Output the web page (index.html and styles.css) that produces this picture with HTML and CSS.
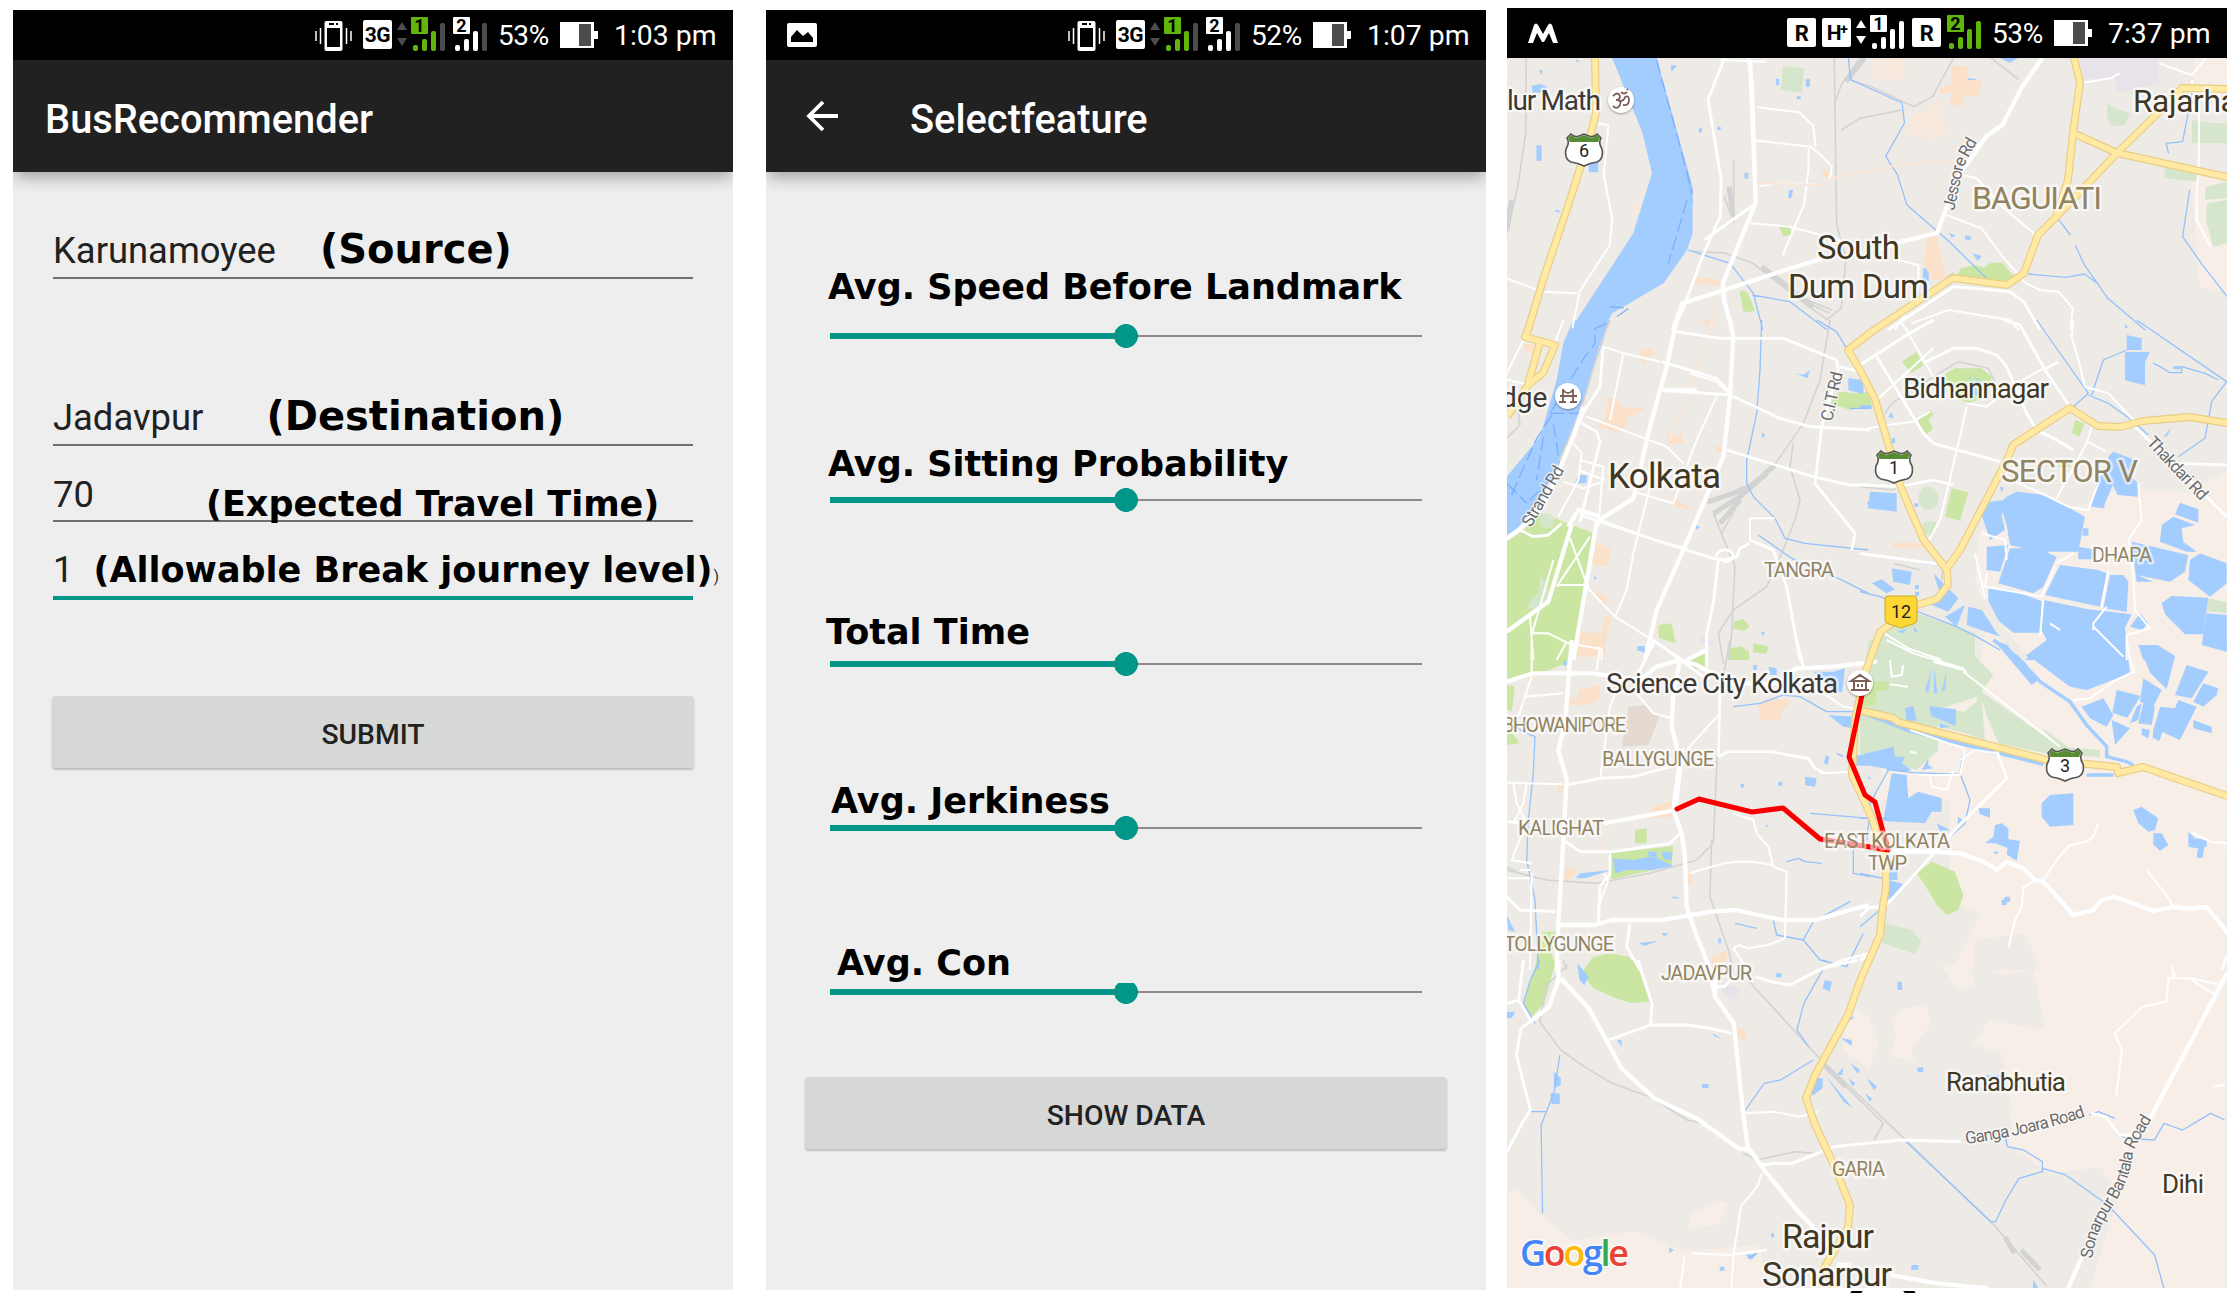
FILE: index.html
```html
<!DOCTYPE html>
<html lang="en">
<head>
<meta charset="utf-8">
<title>BusRecommender</title>
<link rel="stylesheet" href="styles.css">
</head>
<body>
<svg class="defs" width="0" height="0" aria-hidden="true">
  <defs>
    <symbol id="vibrate" viewBox="0 0 37 32"><path d="M1 11v10M5.500 8v16M31.500 8v16M36 11v10" stroke="#fff" stroke-width="1.500"/><rect x="9.500" y="1" width="18" height="30" rx="2" fill="#fff"/><path d="M12 8h13v19H12zM14 3h5v2h-5zM21 3h2v2h-2z" fill="#000"/></symbol>
    <symbol id="updown" viewBox="0 0 10 24"><path d="M5 0l5 8H0zM5 24l5-8H0z" fill="currentColor"/></symbol>
    <symbol id="battery" viewBox="0 0 38 26"><path d="M0 0h34v9h4v8h-4v9H0z" fill="#fff"/><path d="M19 2h12v22H19z" fill="#4d4d4d"/></symbol>
    <symbol id="shield" viewBox="-20 -18 40 36"><path id="shape" d="M-17-12l4-4q4 4 8 2l5-2 5 2q4 2 8-2l4 4q-3 5 1 11 2 10-5 13-7 1-13 4-6-3-13-4-7-3-5-13 4-6 1-11z" fill="#fff" stroke="#555" stroke-width="1.600"/><path d="M-16-12l3-3q4 4 8 2l5-2 5 2q4 2 8-2l3 3q-2 2-1.500 4h-29q0-2-1.500-4z" fill="#568c32"/></symbol>
  </defs>
</svg>
<main class="board">

  <section class="phone">
    <header class="status">
      <svg class="vib"><use href="#vibrate"/></svg>
      <b class="net">3G</b>
      <svg class="updown dim"><use href="#updown"/></svg>
      <span class="sim green"><b>1</b><i class="b1"></i><i class="b2"></i><i class="b3"></i><i class="b4 off"></i></span>
      <span class="sim"><b>2</b><i class="b1"></i><i class="b2"></i><i class="b3"></i><i class="b4 off"></i></span>
      <span class="pct">53%</span>
      <svg class="bat"><use href="#battery"/></svg>
      <time>1:03 pm</time>
    </header>
    <div class="appbar"><h1>BusRecommender</h1></div>
    <form class="form">
      <div class="field source"><span class="val">Karunamoyee</span><span class="note big">(Source)</span></div>
      <div class="field dest"><span class="val">Jadavpur</span><span class="note big">(Destination)</span></div>
      <div class="field travel"><span class="val">70</span><span class="note">(Expected Travel Time)</span></div>
      <div class="field level"><span class="val">1</span><span class="note">(Allowable Break journey level)</span><small>)</small></div>
      <button type="button">SUBMIT</button>
    </form>
  </section>

  <section class="phone second">
    <header class="status">
      <svg class="photo" viewBox="0 0 30 24"><rect width="30" height="24" rx="2" fill="#fff"/><path d="M4 19V14l6-7 6 6 5-4 5 6v4z" fill="#000"/></svg>
      <svg class="vib"><use href="#vibrate"/></svg>
      <b class="net">3G</b>
      <svg class="updown dim"><use href="#updown"/></svg>
      <span class="sim green"><b>1</b><i class="b1"></i><i class="b2"></i><i class="b3"></i><i class="b4 off"></i></span>
      <span class="sim"><b>2</b><i class="b1"></i><i class="b2"></i><i class="b3"></i><i class="b4 off"></i></span>
      <span class="pct">52%</span>
      <svg class="bat"><use href="#battery"/></svg>
      <time>1:07 pm</time>
    </header>
    <div class="appbar">
      <svg class="back" viewBox="0 0 33 32"><path d="M32 16H3M17 2L3 16l14 14" fill="none" stroke="#fff" stroke-width="3.800"/></svg>
      <h1>Selectfeature</h1>
    </div>
    <div class="features">
      <div class="feature f1"><label>Avg. Speed Before Landmark</label><div class="slider"><i></i></div></div>
      <div class="feature f2"><label>Avg. Sitting Probability</label><div class="slider"><i></i></div></div>
      <div class="feature f3"><label>Total Time</label><div class="slider"><i></i></div></div>
      <div class="feature f4"><label>Avg. Jerkiness</label><div class="slider"><i></i></div></div>
      <div class="feature f5"><label>Avg. Con</label><div class="slider"><i></i></div></div>
      <button type="button">SHOW DATA</button>
    </div>
  </section>

  <section class="phone third">
    <header class="status">
      <svg class="moto" viewBox="0 0 30 20"><path d="M0 20L6 2q2-3 4 0l5 9 5-9q2-3 4 0l6 18h-5l-4-10-5 9h-2l-5-9-4 10z" fill="#fff"/></svg>
      <b class="net r">R</b>
      <b class="net h">H⁺</b>
      <svg class="updown"><use href="#updown"/></svg>
      <span class="sim"><b>1</b><i class="b1"></i><i class="b2"></i><i class="b3"></i><i class="b4"></i></span>
      <b class="net r r2">R</b>
      <span class="sim green second-sim"><b>2</b><i class="b1"></i><i class="b2"></i><i class="b3"></i><i class="b4"></i></span>
      <span class="pct">53%</span>
      <svg class="bat"><use href="#battery"/></svg>
      <time>7:37 pm</time>
    </header>
    <svg class="map" viewBox="1507 58 720 1230" width="720" height="1230">
      <rect class="land" x="1507" y="58" width="720" height="1230"/>
      <path class="rural" d="M2227 470l-37 22-40 0-20-10-30 15-40 18-80 15-5 50 12 40-8 50-70 20-50 20 30 35-15 55 76 0 0 100 30 15-30 60 30-10 20 10 34-5 11 60-56-10-16 24 30 10 9 53-4 37 42 30 51-7 17 30-30 98h137z"/>
      <path class="rural" d="M1507 1193l10-4 25 28 32 24 60-10 52 20 74-6 6 43h-259zM1848 1005l22 12 8 30-10 22-25-20zM1900 1010l25-6 6 20-20 25 4 12-24-4 5-25-4-14zM2195 58h32v30l-15 20-20-20zM2190 170l37 12v110l-27-5-5-60zM1940 965l30 0 4 20-15 5zM1690 1215l30-14 8 3-10 20-30 6z"/>

      <g class="areas">
        <g transform="translate(1500) scale(.46755 .33333)">
          <path class="water" d="M240 174H335L412 560V700L400 750 350 850 240 940 220 990H150L285 700 325 520 305 400zM365 195l14 2-12 18zM78 436h11v46H78zM67 258l20-6 15 8-10 18H70zM190 482h20v35h-20zM523 518h8v18h-8zM618 570h9l-4 24h-7zM1010 760l20 8-8 15zM905 805l12 2v38h-14zM1070 174h38l-18 15zM654 238h9v22h-9zM1000 235l18 2v18h-15zM960 698l14 8-8 8zM995 706l12 3v10h-12zM425 385h7v12h-7zM465 380h7v10h-7zM160 180h8v10zM82 210h8v15zM635 288l8 1v8h-8zM15 628h9l-9 55zM115 630h12v10zM590 236h7v20h-7z"/>
          <path class="park" d="M596 678l20-4 10 30-20 4zM512 872l16 3 18 58-25 4zM985 805l30-10 20 8 15-15 25 0 35 60-135-12zM955 830l15-15 5 20z"/>
          <path class="pale" d="M605 198l45 7-5 75-45-10zM1300 310l15 15 32 15-10 35-30 4-10-30zM1480 360l45 10 30 0v60l-55 0-20 0zM1422 505l70 10v30l-70-10zM1510 560l45-15v50l-48 5zM1512 610l43-10v130l-30 10-15-80z"/>
          <path class="beige" d="M965 195l35 5 0 40 30 0-5 50-30-5-10 35-25-10 10-30-30 0 0-20 25-5zM915 710l20 0 20 130-30 0-20-50zM415 830l55 10v18l-55-10zM690 510l20 0v20h-20zM435 960h15v15h-15z"/>
          <path class="soft" d="M880 345l30-15 20-35 20 20 0 40 10 50-40 15-25-20-25 10zM800 174h68v65h-70zM280 620l20-8v25h-20z"/>
          <path class="lilac" d="M1240 174h170v75l-90 30-5-45-65 5z"/>
        </g>
        <g transform="translate(1500 320) scale(.33333)">
          <path class="water" d="M220 0H330L300 90 240 270 190 400 120 540 60 620 20 655V470L120 350 170 180 190 70zM20 865l50-10v20l-50 12zM235 465h25v25h-35zM230 810h12v25h-15zM105 955h12v25h-14zM155 960l15 0v20h-20zM585 615l15 5-10 10zM885 160l25 5 20-15-8 25zM1045 175l45 5-10 40-35-10zM255 695h8v22h-12zM785 340h8v12h-8zM783 935l12 2-6 12zM412 978h22v14h-22zM1100 545h10v25zM282 765l8 10-8 6z"/>
          <path class="park" d="M20 665l45-30 60-55 155 60-45 350-10 30H20zM1020 215l50 5 40-5v45l-60 10-60-20zM475 915l40-5 12 60-50-15zM700 905l30-8 18 20-12 15-35-5zM692 985l30-6 25 15 0 26h-60zM760 972l40 5v20l-40 0zM200 365l-40 90 25-10zM555 1020l60-30v30z"/>
          <path class="pale" d="M140 580a22 22 0 1 0 1 0zM120 765l25 30-5 60-55 15 0-20 30-30z"/>
          <path class="beige" d="M325 230l30 10 10 20 70 5-30 20-20 0-5 30-30 20-60-15 25-25zM420 95l25-10 25 15-25 15-15 20zM285 665l45 20-5 50-40 5-10-20 10-25zM240 935l65 5 10-50 20-5-20 90-80-5zM510 530l80 45-60-15zM500 345l45-2 5 25-25 5-20 0zM275 800l45 30 0 40zM645 378h20v20h-15zM70 70l40 5-8 30-25-15z"/>
          <path class="lilac" d="M600 945l45 25-10 10-40-15z"/>
        </g>
        <g transform="translate(1860 320) scale(.33333)">
          <path class="water" d="M800 45l45 10 0 35-45 0zM795 96l75 0-15 30 0 70-60-15zM30 515l80 5 0 55-85-10zM760 395l65 25-20 40 28 30 0 40-60-5-15-30-25 60 0 10-40-5 22-90 25-10 5-50zM960 548l55 20v40l-70-25zM940 590l65 25-40 10 5 40 40 30-30 0-80-30 5-50zM440 530l30-15 85 10 120 65-20 105-120 0-85-20-10-60-20-65zM365 585l25-40 45-5-10 50 10 40-45 30zM380 680l65-5-25 80-40-5zM450 685l85 0 55 25-40 90-30 20-105-30zM600 735l115 15 25 10-20 100-165-35zM750 765l40 0 15 20-5 90-70-10zM385 805l60 3 100 35-5 95-80 0-75-60zM550 840l135 28 130 15-20 40 10 97H480l80-60-20-40zM655 680l45 8v30l-45 0zM670 625h15v22h-18zM815 665l170 40-10 50-45 30-100-20 50 20-50 0zM1020 700l80 30v60l-50 40-65-50 5-60zM905 850l30-22 110 5-15 110-55 0-60-60zM1040 880l60 5v110l-75-20zM835 975l60 0 50 45H850zM840 880l25 30-20 20-35-10zM95 745l60 10-5 40-50-10zM35 790l30-12 40 30-25 12zM220 760l75 75-30 40-50-20 30-20zM255 890l60-35-25 65zM325 860l40 10 55 80-100-35zM165 795h12v12h-12zM165 815h12v12h-12zM0 190h10v30H0zM0 255h35v12H0zM95 355h10v15H95zM795 12l10 12h-10zM420 500l12 3-8 14zM163 550h12v10h-12zM935 322l-25 30 12-5zM940 138h22v10h-22z"/>
          <path class="park" d="M125 125l45-30 20 40-35 25zM250 165l35-20 40 0 40 0 30 25-10 60-60 20-50-20zM170 300l40-30 10 15-15 15 15 25-20 18zM275 505l50 12-25 85-45-12zM645 300l28 10-15 40-22-10zM0 225l30 0 5 30H0zM590 430h40v10h-35z"/>
          <path class="pale" d="M205 500a30 35 0 1 0 1 0zM190 605l40 0-10 45-30-10zM1045 835l55 12v32l-60-5zM75 925l95-45 175 60v80H25z"/>
          <path class="beige" d="M100 668l90 2v15h-90z"/>
          <path class="water" d="M330 170l15 35 20 20-30 0zM345 170l30 25-10 30zM85 290l10-15 5 20zM110 935l30-10-10 15zM195 970l80-8-40 30zM75 975l60 15 10 8zM160 920l15 15h-12z"/>
        </g>
        <g transform="translate(1500 640) scale(.33333)">
          <path class="park" d="M20 0H215L200 70 95 110 20 130zM555 60l60-20 0 50-40-5zM405 570l35-5v45h-35zM325 640l195-22-5 60-180 40zM20 135l25 5-10 75-15-5zM20 260l40 50-40 5zM125 875l50 0-20 60 10 55H105l10-60zM250 990l30-40 50-10 55 10 30 40zM760 10l45 12-5 20-42-5zM690 25l55 20-5 15-50-10z"/>
          <path class="water" d="M340 655l60 5 60-12 60 30-60 12-80 0-35 10zM240 700l95-10-80 25-28 0zM485 635l30 0 0 25-25-3zM445 635l25 0 0 15-25-3zM415 18l20 8-2 12-20-8zM805 80l25 5v20h-20zM940 95l60 0 35-10-8 70-20 5zM985 225l75 5v35l-30-5zM1058 345l52 0v32l-50 0zM978 345l10 5-5 25-12-5zM720 432h12v8l-8 5zM835 425h12v12h-12zM915 410l35 5-5 25-30-5zM20 825l25 50-20-5zM190 62h10v15h-10zM440 285l12 0v8l-10-2zM485 880l22 0-15 10zM415 910l60-8-40 15zM655 895h8v15h-8zM515 770h20v5h-20zM800 550l5 10-7 0zM760 75h10v15h-10z"/>
          <path class="beige" d="M235 150l65-15 0 40-30 20-65 0 5-20 25 0zM455 500l60-15 10 45-75 5zM775 195l30-20 70 5-25 30-10 30-60 0zM175 430l25 0v25h-30zM230 0h85v50h-85zM200 680l30 10-20 30-20-5zM630 950l50-20 0 35-40 10zM555 700h20v35h-20z"/>
          <path class="hospital" d="M385 200l50-5 15 15 30 15-35 90-80 5z"/>
        </g>
        <g transform="translate(1860 640) scale(.33333)">
          <path class="pale" d="M25 0H345V50L400 105 365 155 600 320 720 330V350L580 345 415 310 385 240 365 180 375 300 300 275 300 225 350 185V170L230 210 235 330 170 390 100 370 0 340V215zM545 262l80 60-30 0zM70 850l80 18 35 35-20 38-80-25-25-10z"/>
          <path class="park" d="M35 125l50 0 0 25-35 5-5 40-40 5zM170 700l45-35 70 30 25 70-15 45-35 15-30-30-35-60z"/>
          <path class="pale" d="M220 200l90 15-10 60-80-20z"/>
          <path class="water" d="M510 50l100-50 190 20 10 80-130 50-50-10zM400 0l60 20 75 100-20 15zM620 0h170l-20 20zM840 20l65 3 40 25-25 100-50-50zM980 75l65 20-50 80-50-10zM1030 130l45 15-5 20-40 35-30-15zM770 150l72 18-40 65-45-15zM665 200l65-25 30 50-20 35-50-25zM850 115l55 35-25 50-40-15zM850 190l35 10-10 55-40-5zM900 200l45 5-25 75-40-10zM955 180l55 20-50 100-45-20zM1000 240l55 20v20l-55-15zM755 240l55 25-45 50zM845 265l25 5-5 25-20-10zM880 265l28 8-10 30-20-10zM810 250l20-50 15-10-10 50zM135 205l25-8 10 45-30 0zM208 198l80 10 0 50-75-30zM240 250l30 10-30 5zM195 150l20-60-10 70zM222 160l0-80 10 80zM245 158l15-70-5 60zM0 345l100-25 5 30 30 0-10 20 30 20-25 5-125-22zM95 400l45 5 5 70 30-20 70 20v40l-30 0-20 35-125-7zM185 390l20-35 0 20 15 10zM355 505l35 0v28l-30-10zM405 555l20-5 20 15 0 60-40-15-30 0 25-20zM445 598l35 5-10 60-30-20zM545 490l25-25 70-5v95l-70 5-25-30zM820 510l25-10 50 35-10 35-20 5-30-25zM880 580l25 0 20 35-25 18-20-20zM985 575l20 20 35 5 0 20-30 5-25-5zM1015 620l18 0-5 33-18 0zM90 660l22 0v60l-22 0zM85 720l45 12-45 50zM435 770h15v15l-22 0zM425 780h15v15h-15zM230 550l40 20-30 5zM295 530l12 10-15 15zM1030 0h70v35l-45-15zM400 635h15l-8 10zM25 405l8 12h-8z"/>
          <path class="land" d="M345 900l150-20 50 110H345z"/>
        </g>
        <g transform="translate(1500 960) scale(.46755 .33333)">
          <path class="park" d="M80 0h40L95 130 68 170 50 130zM175 40l20-40h95l30 125-40 5-40-20-40-25z"/>
          <path class="water" d="M165 10l25 40-10 25-10-15zM695 60l15 5-5 30-15-10zM735 175l25-5-20 20zM730 235l22 5 0 18zM750 310l20 20-5 12zM720 345l15-25-3 25zM745 355l15 15-5 10zM785 355l22 25-8 10zM780 400l15 15-3 12zM695 345l60 100-20-20zM675 355l15 0 0 30-20 20-20-10zM115 335l15 20 0 20-15 10zM108 400h20v32h-18zM432 372h14v12h-14zM893 322h12v14h-12zM850 65h10v25h-10zM525 885l25-5-12 20zM362 862l10 8-10 10zM880 915h15v15h-15zM250 240h10v20zM455 220l20 18-18-10zM15 155h18l-8 20H15zM1140 960l12 25h-12zM590 40h12v12h-12zM470 920h10v12h-10zM580 820h6v12h-6zM1040 345h35v8h-35z"/>
          <path class="beige" d="M495 200l30 10 0 30-20-10zM605 700h12v10h-12z"/>
          <path class="lilac" d="M480 70l35 15-15 38-25-30z"/>
        </g>
      </g>

      <g class="lines">
        <g transform="translate(1500) scale(.46755 .33333)">
          <path class="rail" d="M56 174L55 400 38 560 15 700M715 174l5 500 20 100-10 150-30 35-60-60-100-110-60-30-70-5M770 174l-40 80-15 60M735 235l60 25 90 60 40-30 45-116M730 390l40-35 90-25M500 480v190M480 590l15 60M1050 174l60 65M660 910l45 30M640 890l70 40"/>
          <path class="rail thick" d="M25 600L15 690M560 800l110 120M780 174l-40 70M490 560l8 90"/>
          <path class="stream" d="M745 174l5 65 110 70 5 60-40 100 25 55 20 90 90 110 80 110M402 750l90 40 50 90 20 110M540 885l80 20 80 85M1190 650l30 55M1230 735l20 60 50 100 80 95M1130 822l80 10 40-10 30 30M1480 280l-20 145-35 5 5 30M1475 570l-15 140 40 80 55 100M400 520l12 90"/>
          <path class="dash" d="M335 180l77 400M400 600l-40 190M235 920l40 5-30 30"/>
          <path class="road thin" d="M205 370l27 5-10 150 18 130-5 80-65 140-15 110M15 835l75 40 75 5M540 420l125 20 25 30 20 30-5 40-15 15-90-5-45 8M660 445l0 60-10 110-45 150M550 322l90 15 30 40 5 65M535 670l85 10 80 30 40 15M955 645l75 40 45 85 50 80 30 20 40 5 30 50-5 65M990 525l30 10 50 80 80 95M850 780l45 15 0 60-30 90-20 45M880 970l80-40 130 30 20 30M1240 250l65-15 20-15M1410 190l70 35 30-51M1480 240l0 20 15 40 0 180-5 100 0 80 30 80M470 180l100 5"/>
          <path class="road" d="M480 174l-35 125 28 240-2 110-35 110-45 170-20 60M530 174l10 70 8 365-110 110"/>
          <path class="road wide" d="M535 178l12 430-70 240 2 50 18 95M1160 174l-45 90-40 110-35 35-30 60-25 50-40 140-10 40-75 25-60 30M690 775l-80 35-130 60-90 40-20 80"/>
          <path class="road" d="M830 990l140-130 120 15 30 30 35 85"/>
          <path class="peach" d="M550 550l140 5 20-20 120-35 140-20M470 880l-15 110"/>
        </g>
        <g transform="translate(1500 320) scale(.33333)">
          <path class="rail" d="M330 0l-30 75-50 170-85 215M990 0l-30 180-50 130-90 130-80 60M880 370l-10 70 30 100-15 60-40 100-45 100-100 70-45 70 15 90M620 550l180-80M640 590l180-150M640 580l65 160-10 200-10 80M665 640l60-110M20 355l40-40-5-40-40-10"/>
          <path class="rail thick" d="M625 545l120-40 80-70M640 580l80-50 80-70M660 610l60-70"/>
          <path class="stream" d="M785 0l-5 150-10 130-30 140 0 70 20 40 65 65 30 60 60 15 190 20M775 645l100 70 140 60 90 45M950 0l60 35 35 60M1110 265l-60 0"/>
          <path class="dash" d="M320 10l-35 15v45l-30 40-45 70-60 100M150 280h90M155 285l-50 80-70 160M160 310l10 60 10 80-90 90M20 490l60 60M130 350l-20 130"/>
          <path class="peach" d="M640 0l-70 200-60 160M400 510l120 40M680 385l80 30M590 500l25 45M480 900l-25 60"/>
          <path class="road thin" d="M190 0l-25 70M70 60L20 160M20 178l80 20M310 80l60 20-40 200M480 125l-110-25M570 160l80 25 45 45M650 230l-60 130-70 190-120-35M450 500l-50 200-20 110-35 80M260 290l240 90 50 50M220 370l25 30-10 80-60 110M240 420l70 20-15 180M190 485l60 20 60-20M235 450l80 30M750 660l0-65 75 0M300 600l180 65 80 20M100 940l45 0 60 30 100 18v32M90 890l10 130M170 795h95M210 655l55 150M270 650l-100 150M160 720l-65 225M250 790l95 100 105 65 100 65M200 965l-30 55"/>
          <path class="road" d="M530 35l130 20 190 0 160 65 5 30-50 170-20 170 120 150-10 50M310 80l-10 120-45 70-70 160M245 310l45 25 10 30-60 240M480 210l210 15 150 70 90 25 180 10M485 125l165 50 45 50M680 390l260 80 110 25 60 0M240 585l240 80 80 25 80 25 30 5 40-10 10-25 30-15M650 710a25 18 0 1 1 20 15M655 720l-15 130-20 90 0 80M750 660l70 30 40 110 40 220M1020 140l60 15M20 655l40-25 40 20 45-5 40-35"/>
          <path class="road wide" d="M530 0l-30 140-50 180-50 215-110 70-30 180-40 235M690 0l10 50-10 180-20 180-120 280-80 180-35 150M490 210h100M560 1020l60-30M215 615l-70 230-125 90M300 590l-65-20-30 50M250 260l-30 90-90 210-75 70-35 25"/>
        </g>
        <g transform="translate(1860 320) scale(.33333)">
          <path class="stream" d="M530 0l155 220-50 45M685 225l60 25 70 50 50 45M695 225l35-105 70-30M830 0l270 185-45 60-20 110-80 55M880 130l20 10 30 18 35 0v-18l70 20 40 20M0 815l60 15 100 40 130 50 60 30 70 40M0 700l230 35"/>
          <path class="rail" d="M75 280l20-30 110-70 90-55 90 20 20 40M0 500l100 10 15-15M245 780l5-60M100 730l80 20"/>
          <path class="road thin" d="M120 0l25 40 75 130M220 85L50 240M0 330l80-15 80-10 50-30M695 320l-15 50-60 110-30 55M680 365l60 30M560 140l-100 55-80 65-60-10M320 260l-20 90-60 250-35 65M715 490l-30 80-60-10-70-35-80-35-40-25M65 935l80 50 100 35M640 0l-5 50 20 70 20 80 70 20 75 80M835 490l10 110-40 60 15 110 5 100 45 55-70 20v75M700 930l0-20 40-50M700 920l90 90M600 930l-30-20M550 840l-10 110"/>
          <path class="road" d="M0 135L140 45 220 0M50 110l140 230 30 30 200 55M190 130l90-45 70 0 60 20 30 35 60 140 30 50 60 30 50 30M430 0l50 15 75 135 75 110M550 150l45-25M0 495l120 5 100-20 60 15M815 310l285 280M950 430l150 5"/>
          <path class="road" d="M0 700l230 32"/>
          <path class="road thin" d="M365 640l70 20 5 60M380 760l-5 40 170 30 40-90M590 730l50-30M745 750l-20 110M345 700l40 180"/>
          <path class="wash" d="M370 840l45 85 80 95"/>
        </g>
        <g transform="translate(1500 640) scale(.33333)">
          <path class="rail" d="M690 0l-30 160-20 450-50 50-140 40-160 30-150-10-120-30M635 600l-5 170 55 160 15 60M20 680l30 15M190 960l10 30"/>
          <path class="stream" d="M20 245l50 30 35 15-5 110-15 140-5 120 25 120 10 210M700 200l80-10 70-25 50 5 80 45 80 0M1110 520l-10 80-40 30 0 70 50 10M860 665l35-10 20 10 50 5M820 840l10 45 80 15 30-55 110-60M910 900l50 60 80 20 50-100M930 520l180 15M705 850l65 15M1010 340l20 10"/>
          <path class="peach" d="M310 540l0 100"/>
          <path class="road thin" d="M20 428l170 5M40 430l10 60 30 60-45 110 60 10M80 430l-10 60-30 60M75 170l115-10M95 110l-20 60-20 60M300 420l30-220 30-80M410 160l50 60 55 15M560 330l100-110M700 520l60 20 10 40 35 40 15 60 40 15-5 200-50 20-60 10-30-10-15 10 40 60M95 700l-5 290M235 0l-25 60M300 20l-10 70M95 100l0-100M60 690l30 0M20 715h70M310 700l15 20-30 80 0 50M570 700l100-30 40-5 50 0 60 10M960 400l100-5M970 160l60 40 60 10"/>
          <path class="road" d="M200 435l100-20 100-5 110-30M20 770l40 40 105 5M190 600l50 35 100 0 170-25 30-30M330 640l0 60-30 40-5 115M655 350l30-15 130 0 50 10 60 10 20 30 30 15M390 850l-10 70 40 70M465 0l-50 100M460 0l150 110M550 325l-20 170M660 150l-5 200M620 0l0 80M890 0l20 80M20 545l60 5M1110 940l-80 20-70 30"/>
          <path class="road wide" d="M215 0l-20 250-20 80 25 90-10 180-15 250-5 140M20 125l80-25 180 0 140 20 50-40 70-20 50 15 100 55 140 0 60-45 110-5 130-15M540 60l-20 100-5 100 25 100-20 150 25 70 10 70 5 150 20 60 50 130M310 550l220-40M175 855l110 0 50-15 150 0 150-25 70-5 140 30 100 0 160-45"/>
        </g>
        <g transform="translate(1860 640) scale(.33333)">
          <path class="stream wide-stream" d="M400 0l70 50 70 75 90 60 50 70 60 65 0 30 60 15 20 10M0 218l60 20 90 35 400 100M680 405l80 0"/>
          <path class="stream" d="M80 388l80 10 140 5M310 330l-10 70 30 80-15 70-50 45M0 535h80M85 390l-55 100 0 50M0 860l60-50M0 700l90 20"/>
          <path class="road thin" d="M80 0l80 40 150 45 10 15M220 65l90 25M90 60l5 50 30-5 5-30M90 133l55 8M550 720l40-60 40-45 50-10 20-15 15-40M525 722l-35 20-5 60-20 40-20 80M860 690l70 90 10 20M990 575l60 30 50 5M820 95l-60 30-70 50-50 5M800 0l10 60 15 40M150 270l160 55 0 30-10 50-130 0M300 360l45-30 70 10M210 410l5 30 45 10 20-60M0 805l60-8M60 800l30-20M150 335l20 5"/>
          <path class="road thin" d="M310 95l290 225"/>
          <path class="road" d="M410 330l30 85-150 150-210 230-20 15M0 830l25-25 40-5"/>
          <path class="road wide" d="M90 635l130 0 80 5 70 25 40 25 30-25 50 20 35 35 25 5 90 100 60-15 25-30 40-10 115 43 60-12 50 5 50-5 65 80"/>
          <path class="road" d="M0 960l20-10M1100 950l-15 40"/>
        </g>
        <g transform="translate(1500 960) scale(.46755 .33333)">
          <path class="rail" d="M145 15l-45 60-15 110 45 85 50 50 60 50 80 40 80 70 50 15M520 580l30 20 80-25 40 5M530 60l150 230 180 240 200 270 110 180M690 310l130 180-20 50"/>
          <path class="rail thick" d="M690 310l50 70M1080 830l20 50M1115 870l40 60"/>
          <path class="stream" d="M85 0l-20 60-15 70 25 60M128 285l-12 110-28 100 3 265M60 455h40M670 300l-70 60-35 10-40 80M690 30l-40 100-15 80 25 50M865 540l185 245 10 0 20-60 30-70 50-20 0-30-40-35-35-10-5-40M1160 625l50 20 90 90 100 150 20 100M1320 520l20 15 60 5 20-50 40 20 60-50 30 20M1260 465l20-10 35 20M690 0l10 5M530 895l20-15"/>
          <path class="road thin" d="M560 640l-10 40-35 60-15 140-5 105M525 460l60-5 55 15 40-15M410 880l80 5 80-15M395 890l-10 95M1540 75l-60-20-50 0-5 70-50 15-60 80 15 50-12 140M1480 60l50 45M1440 30v25M1525 380l25-5M1435 20l10 30"/>
          <path class="road" d="M50 0l-10 120 25 60M15 130l25-10M65 185l-20 20-10 80 30 165-20 45-30 80M295 0l30 130-3 65-90 45M320 195l80 0 50 10 45 15M545 50l35 15 40 10 70-50 75-25M460 80l20 0 20-30M560 615l25-5 40 0 90-50 140-20 130 5M440 0l20 115M1265 460l30 10 30 55 35 0"/>
          <path class="road wide" d="M125 0v60l-20 80-40 45M130 55l60 90 70 180 70 90 90 60 90 90 25 5 30 60 70 120 75 110M460 60l0 50 40 80 20 270 10 105M1555 40l-170 450M1245 890l-30 95M835 945l100 25 110 15M720 915l30 0"/>
        </g>
      </g>

      <defs>
        <g id="highways">
          <path d="M1595 58l1 55-5 20-21 67-26 77-16 53-3 7 30 8-12 28-15 12-21 32M1540 342l-12 42"/>
          <path d="M2074 58l6 24-7 51-5 47-12 37-18 18-14 38-17 12-54-7-79 52-26 20 12 20 15 29 15 51 10 35 23 54 24 31 1 15-11 14-20 6-37 27-15 41-10 47-3 55 20 43 14 45 0 25-3 17-3 30-20 46-12 34-33 60-9 23 9 27 19 40 16 40-2 23-24 40 19 35"/>
          <path d="M1947 568l13-18 47-90 6-15 57-37 28 18 22 1 23-6 47-4 37 6M2073 133l44 20 110 24M2056 217l61-64 51-50 14-15 45 1M1858 710l35 8 5 4 149 38 70 7 1 6 25-6 84 29"/>
        </g>
      </defs>
      <use href="#highways" class="casing"/>
      <use href="#highways" class="highway"/>

      <path class="route" d="M1677 809l22-10 53 13 31-4 37 31 50 8 18 3-13-48-10-7-16-38 13-62"/>

      <g class="poi">
        <circle cx="1621" cy="100" r="13"/><circle cx="1568" cy="396" r="13"/><circle cx="1860" cy="683" r="13"/>
        <path d="M1613 96q5-5 7 0 0 4-4 4 6 0 4 5-3 5-7 1M1620 101q4 0 5-4 4-2 4 3 0 6-6 5M1621 92q3 3 6 0M1627 90l1-1" fill="none"/>
        <path d="M1559 402h7M1570 402h7M1560 396h17M1563 389v13M1573 389v13M1563 390q5 6 10 0" fill="none"/>
        <path class="frame" d="M1851 681l9-6 9 6zM1854 682v7M1866 682v7M1851 690h18M1858 684v3M1862 684v3" fill="none"/>
      </g>
      <g class="badge">
        <use href="#shield" x="1564" y="132" width="40" height="36"/><text x="1584" y="157">6</text>
        <use href="#shield" x="1874" y="449" width="40" height="36"/><text x="1894" y="474">1</text>
        <use href="#shield" x="2045" y="747" width="40" height="36"/><text x="2065" y="772">3</text>
        <path d="M1888 596h26q3 0 3 3v21q0 3-4 4l-12 4-12-4q-4-1-4-4v-21q0-3 3-3z" fill="#fdd835" stroke="#c9a92c"/><text x="1901" y="618">12</text>
      </g>

      <g class="label">
        <g class="town">
          <text x="1507" y="110" font-size="28" textLength="94">lur Math</text>
          <text x="1501" y="407" font-size="28">dge</text>
          <text x="1606" y="693" font-size="28" textLength="232">Science City Kolkata</text>
        </g>
        <g class="city">
          <text x="1817" y="259" font-size="33" textLength="83">South</text>
          <text x="1788" y="298" font-size="33" textLength="141">Dum Dum</text>
          <text x="2133" y="112" font-size="31.500" letter-spacing="-.3">Rajarhat</text>
          <text x="1608" y="488" font-size="35" textLength="113">Kolkata</text>
          <text x="1903" y="398" font-size="28" textLength="146">Bidhannagar</text>
          <text x="1946" y="1091" font-size="26" textLength="120">Ranabhutia</text>
          <text x="2162" y="1193" font-size="26" textLength="42">Dihi</text>
          <text x="1782" y="1248" font-size="34" textLength="92">Rajpur</text>
          <text x="1762" y="1286" font-size="34" textLength="130">Sonarpur</text>
        </g>
        <g class="area">
          <text x="1972" y="209" font-size="32" textLength="130">BAGUIATI</text>
          <text x="2001" y="482" font-size="31" textLength="137">SECTOR V</text>
          <text x="1764" y="577" textLength="70">TANGRA</text>
          <text x="2092" y="562" textLength="60">DHAPA</text>
          <text x="1502" y="732" textLength="124">BHOWANIPORE</text>
          <text x="1602" y="766" textLength="112">BALLYGUNGE</text>
          <text x="1518" y="835" textLength="86">KALIGHAT</text>
          <text x="1504" y="951" textLength="110">TOLLYGUNGE</text>
          <text x="1661" y="980" textLength="91">JADAVPUR</text>
          <text x="1824" y="848" textLength="126">EAST KOLKATA</text>
          <text x="1868" y="870" textLength="39">TWP</text>
          <text x="1832" y="1176" textLength="53">GARIA</text>
        </g>
        <g class="street">
          <path id="jessore" d="M1954 211l9-42q3-8 16-30"/><text><textPath href="#jessore" textLength="74">Jessore Rd</textPath></text>
          <path id="cit" d="M1832 422l12-54"/><text><textPath href="#cit" textLength="50">C.I.T Rd</textPath></text>
          <path id="strand" d="M1531 528l38-66"/><text><textPath href="#strand" textLength="67">Strand Rd</textPath></text>
          <path id="thakdari" d="M2146 443l62 66"/><text><textPath href="#thakdari" textLength="80">Thakdari Rd</textPath></text>
          <path id="ganga" d="M1966 1144q65-9 124-29"/><text><textPath href="#ganga" textLength="123">Ganga Joara Road</textPath></text>
          <path id="sonarpur" d="M2092 1259q4-30 24-58 16-27 17-49 3-8 23-40"/><text><textPath href="#sonarpur" textLength="154">Sonarpur Bantala Road</textPath></text>
        </g>
      </g>
      <text class="google" x="1520" y="1266" textLength="109"><tspan fill="#4285f4">G</tspan><tspan fill="#ea4335">o</tspan><tspan fill="#fbbc05">o</tspan><tspan fill="#4285f4">g</tspan><tspan fill="#34a853">l</tspan><tspan fill="#ea4335">e</tspan></text>
    </svg>
    <div class="marks"><i></i><i></i></div>
  </section>
</main>
</body>
</html>
```
FILE: styles.css
```css
* { box-sizing: border-box; }
body { margin: 0; background: #fff; font-family: Roboto, "Liberation Sans", sans-serif; }
.defs { position: absolute; }
.board { display: flex; height: 1293px; padding-left: 13px; overflow: hidden; }
.phone { width: 720px; height: 1280px; margin-top: 10px; background: #eee; flex: none; }
.second { margin-left: 33px; }
.third { margin: 8px 0 0 21px; height: 1285px; background: #fff; }

/* status bar */
.status { height: 50px; background: #000; color: #fff; display: flex; justify-content: flex-end; padding: 7px 11px 0 0; font-size: 28px; }
.vib { width: 37px; height: 32px; margin: 3px 11px 0 0; }
.net { width: 29px; height: 29px; margin-top: 3px; background: #fff; color: #000; border-radius: 2px; font: bold 21px/31px Roboto, sans-serif; text-align: center; letter-spacing: -.5px; }
.net.r, .net.h { font-size: 22px; }
.net.h { margin-left: 6px; letter-spacing: -2px; font-size: 21px; }
.updown { width: 10px; height: 24px; margin: 5px 4px 0 5px; color: #fff; }
.dim { color: #4d4d4d; }
.sim { display: grid; grid-template: 17px 17px / 17px 17px; width: 34px; height: 34px; position: relative; color: #fff; margin-right: 8px; }
.sim + .pct { margin-left: 3px; }
.sim b { background: currentColor; border-radius: 1px; height: 17px; line-height: 18px; font-size: 18px; text-align: center; }
.sim b::first-letter { color: #000; }
.sim i { position: absolute; bottom: 0; width: 5px; border-radius: 2px; background: currentColor; }
.sim .b1 { left: 2px; height: 6px; }
.sim .b2 { left: 11px; height: 12px; }
.sim .b3 { left: 20px; height: 20px; }
.sim .b4 { left: 29px; height: 28px; }
.sim .off { background: #4d4d4d; }
.green { color: #60b60a; }
.second-sim { margin-left: 6px; }
.pct { width: 52px; line-height: 38px; letter-spacing: -.4px; }
.bat { width: 38px; height: 26px; margin: 5px 16px 0 10px; }
.status time { width: 108px; line-height: 38px; font-size: 28.400px; white-space: nowrap; }
.photo { width: 30px; height: 24px; margin: 6px auto 0 21px; }
.moto { width: 30px; height: 20px; margin: 8px auto 0 21px; }

/* app bar */
.appbar { height: 112px; background: #212121; color: #fff; display: flex; align-items: center; padding-left: 32px; box-shadow: 0 8px 14px -2px rgba(0,0,0,.3); clip-path: inset(0 0 -24px 0); }
.appbar h1 { margin: 6px 0 0; font-size: 39.800px; font-weight: 500; letter-spacing: 0; }
.back { width: 33px; height: 32px; margin: 0 71px 0 8px; }

/* route form */
.form { padding: 0 40px; display: flex; flex-direction: column; }
.field { display: flex; align-items: baseline; border-bottom: 2px solid #6f6f6f; white-space: nowrap; height: 76px; line-height: 40px; color: #212121; }
.val { font-size: 36.400px; }
.note { font: bold 35px/40px "DejaVu Sans", sans-serif; color: #000; }
.note.big { font-size: 40px; }
.source { height: 107px; padding-top: 57px; }
.dest { height: 167px; padding-top: 117px; }
.travel { padding-top: 38px; }
.travel .val { align-self: flex-start; margin-top: -9px; }
.level { height: 78px; padding-top: 28px; border-bottom: 4px solid #009688; }
.source .note { margin-left: 44px; }
.dest .note { margin-left: 63px; }
.travel .note { margin-left: 112px; }
.level .note { margin-left: 20px; }
.level small { font-size: 16px; color: #333; margin-left: 1px; }
button { display: block; height: 72px; width: 642px; border: 0; border-radius: 4px; background: #d6d8d7; box-shadow: 0 2px 2px rgba(0,0,0,.2); color: #212121; font: 500 28.300px/72px Roboto, sans-serif; padding: 3px 0 0; }
.form button { margin: 96px 0 0 -1px; }

/* feature sliders */
.features { padding: 75px 39px 0; display: flex; flex-direction: column; }
.feature { height: 164px; padding-left: 23px; display: flex; flex-direction: column; }
.feature label { height: 77px; font: bold 35px/80px "DejaVu Sans", sans-serif; color: #000; white-space: nowrap; }
.f2 label { margin: 13px 0 0 0; height: 64px; }
.slider { width: 592px; height: 24px; margin-left: 2px; background: linear-gradient(#8c8c8c, #8c8c8c) 0 11px / 100% 2px no-repeat; }
.slider i { display: block; width: 308px; height: 24px; background: radial-gradient(circle at 296px 12px, #009688 11.600px, transparent 12.200px), linear-gradient(#009688, #009688) 0 9px / 290px 6px no-repeat; }
.f3 label { margin: 17px 0 0 -2px; height: 60px; }
.f4 label { margin: 22px 0 0 3px; height: 55px; }
.f5 label { margin: 20px 0 0 9px; height: 57px; }
.f5 .slider i { clip-path: inset(3px 0 0); }
.features button { margin-top: 10px; }

/* map */
.map { display: block; }
.land { fill: #eeebe7; }
.rural { fill: #f7eee8; }
.water { fill: #a3ccff; }
.park { fill: #cbe6a3; }
.pale { fill: #d6e6cc; }
.beige { fill: #fbe1ca; }
.soft { fill: #f8e9df; }
.lilac { fill: #e8e3ea; }
.hospital { fill: #e5dad2; }
.lines path { fill: none; vector-effect: non-scaling-stroke; stroke-linejoin: round; }
.rail { stroke: #d3d3d4; stroke-width: 1.600; }
.thick { stroke-width: 5; }
.stream { stroke: #93c1fb; stroke-width: 1.300; }
.wide-stream { stroke: #a3ccff; stroke-width: 3.500; }
.dash { stroke: #7eaefa; stroke-width: 1.300; stroke-dasharray: 14 5; }
.peach { stroke: #fbe7d8; stroke-width: 2; }
.wash { stroke: #eeebe7; stroke-width: 8; }
.road { stroke: #fff; stroke-width: 2.800; }
.road.thin { stroke-width: 2; }
.road.wide { stroke-width: 4.300; }
.casing, .highway { fill: none; stroke-linejoin: round; stroke: #e8ce86; stroke-width: 8; }
.highway { stroke: #ffe9a3; stroke-width: 5.600; }
.route { fill: none; stroke: #f80000; stroke-width: 5; stroke-linejoin: round; stroke-linecap: round; }
.poi circle { fill: #fff; filter: drop-shadow(0 1px 1px rgba(0,0,0,.35)); }
.poi path { stroke: #7b5f58; stroke-width: 1.800; }
.poi .frame { stroke-width: 2; }
.badge text { font-size: 18px; text-anchor: middle; fill: #222; }
.label text { paint-order: stroke; stroke: rgba(255,255,255,.6); stroke-width: 5px; stroke-linejoin: round; }
.town { fill: #3c3833; }
.city { fill: #403824; }
.area { fill: #918362; font-size: 20px; }
.street { fill: #6b6b6b; font-size: 17px; }
.street text { stroke-width: 3px; }
.street path { fill: none; }
.google { font: 600 36px "Open Sans", sans-serif; paint-order: stroke; stroke: rgba(255,255,255,.7); stroke-width: 3px; }
.marks { height: 2px; margin: 3px 0 0 344px; display: flex; gap: 42px; }
.marks i { width: 11px; height: 2px; background: #000; transform: skewX(-40deg); }
.marks i + i { transform: skewX(40deg); }
```
